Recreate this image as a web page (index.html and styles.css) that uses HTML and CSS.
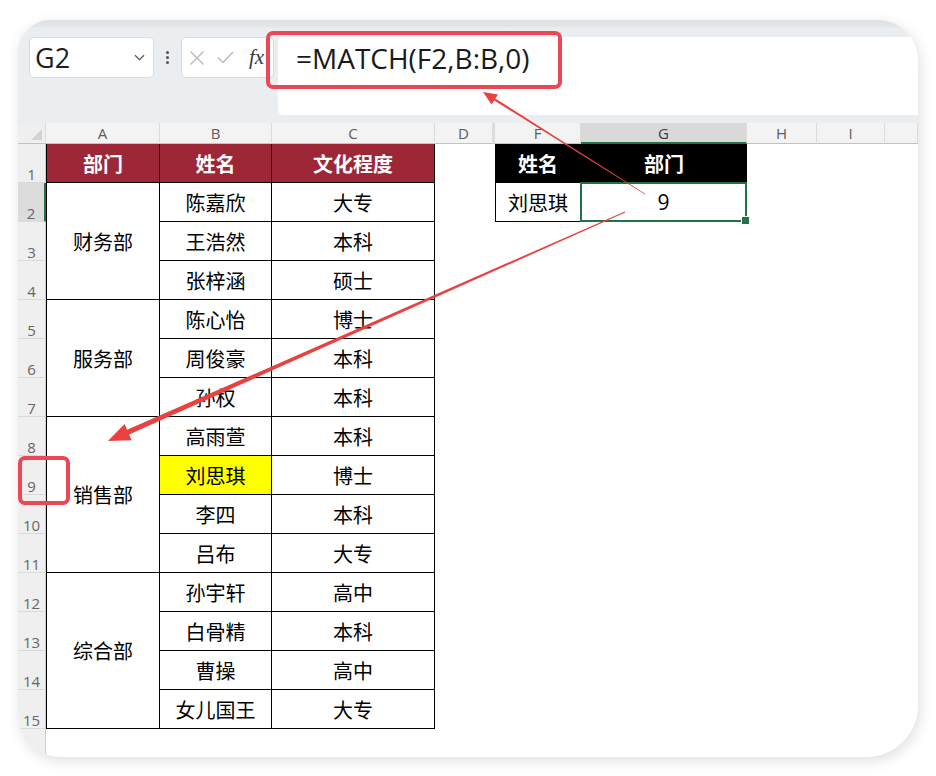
FILE: index.html
```html
<!DOCTYPE html>
<html lang="zh">
<head>
<meta charset="utf-8">
<link rel="stylesheet" href="styles.css">
</head>
<body>
<div class="card">
  <div class="fbar">
    <div class="namebox">
      <span class="ref">G2</span>
      <svg class="chev" width="11" height="7" viewBox="0 0 11 7"><path d="M1 1.2 L5.5 5.6 L10 1.2" fill="none" stroke="#555" stroke-width="1.2"/></svg>
    </div>
    <div class="dots"><i></i><i></i><i></i></div>
    <div class="funcs">
      <svg width="16" height="16" viewBox="0 0 16 16"><path d="M1.5 1.5 L14.5 14.5 M14.5 1.5 L1.5 14.5" stroke="#b9b9b9" stroke-width="1.4" fill="none"/></svg>
      <svg width="17" height="13" viewBox="0 0 17 13"><path d="M1 6.5 L6 11.5 L16 1" stroke="#b9b9b9" stroke-width="1.4" fill="none"/></svg>
      <span class="fx">fx</span>
    </div>
    <div class="input"><span class="formula">=MATCH(F2,B:B,0)</span></div>
  </div>
  <div class="sheet">
    <div class="ch corner"><svg width="11" height="11" viewBox="0 0 11 11"><path d="M11 0 L11 11 L0 11 Z" fill="#d3d3d3"/></svg></div>
    <div class="ch">A</div><div class="ch">B</div><div class="ch">C</div><div class="ch">D</div><div class="ch hid"></div><div class="ch">F</div><div class="ch sel">G</div><div class="ch">H</div><div class="ch">I</div><div class="ch"></div>

    <div class="rh">1</div><div class="t th a">部门</div><div class="t th">姓名</div><div class="t th">文化程度</div><div class="k kf">姓名</div><div class="k kg">部门</div>
    <div class="rh sel">2</div><div class="t a s3">财务部</div><div class="t">陈嘉欣</div><div class="t">大专</div><div class="v kf vl">刘思琪</div><div class="v kg act">9</div>
    <div class="rh">3</div><div class="t">王浩然</div><div class="t">本科</div>
    <div class="rh">4</div><div class="t">张梓涵</div><div class="t">硕士</div>
    <div class="rh">5</div><div class="t a s3">服务部</div><div class="t">陈心怡</div><div class="t">博士</div>
    <div class="rh">6</div><div class="t">周俊豪</div><div class="t">本科</div>
    <div class="rh">7</div><div class="t">孙权</div><div class="t">本科</div>
    <div class="rh">8</div><div class="t a s4">销售部</div><div class="t">高雨萱</div><div class="t">本科</div>
    <div class="rh">9</div><div class="t y">刘思琪</div><div class="t">博士</div>
    <div class="rh">10</div><div class="t">李四</div><div class="t">本科</div>
    <div class="rh">11</div><div class="t">吕布</div><div class="t">大专</div>
    <div class="rh">12</div><div class="t a s4">综合部</div><div class="t">孙宇轩</div><div class="t">高中</div>
    <div class="rh">13</div><div class="t">白骨精</div><div class="t">本科</div>
    <div class="rh">14</div><div class="t">曹操</div><div class="t">高中</div>
    <div class="rh">15</div><div class="t">女儿国王</div><div class="t">大专</div>
  </div>
</div>
<svg class="annot" width="936" height="776" viewBox="0 0 936 776">
  <rect x="268" y="33" width="292" height="54" rx="5" fill="none" stroke="#ec4756" stroke-width="4"/>
  <rect x="20" y="458" width="48" height="45" rx="5" fill="none" stroke="#ec4756" stroke-width="4"/>
  <polygon points="645.2,193.7 495.4,98.5 498,94.4 483,92 491.6,104.6 494.2,100.5 644.8,194.3" fill="#e8413f"/>
  <polygon points="624.8,211.5 127.1,429.8 124.5,423.9 108,441 131.7,440.3 129.1,434.4 625.2,212.5" fill="#e8413f"/>
</svg>
</body>
</html>
```

FILE: styles.css
```css
* { box-sizing: border-box; margin: 0; padding: 0; }
html, body { width: 936px; height: 776px; background: #fff; overflow: hidden; }
body { position: relative; font-family: "Open Sans", "Noto Sans CJK SC", sans-serif; padding: 20px 18px 0 18px; }

.card {
  width: 900px;
  height: 737px;
  border-radius: 32px 40px 52px 42px;
  overflow: hidden;
  background: #fff;
  box-shadow: 2px 4px 14px rgba(0, 0, 0, 0.13);
  display: flex;
  flex-direction: column;
}

.fbar {
  height: 103px;
  flex: none;
  display: flex;
  align-items: flex-start;
  padding: 17px 0 0 11px;
  background: linear-gradient(#dde1e6 0, #e3e7eb 7px, #ebeef1 8px);
}
.namebox {
  width: 125px; height: 41px;
  background: #fff;
  border: 1px solid #d9dcdf;
  border-radius: 5px;
  display: flex; align-items: center; justify-content: space-between;
  padding: 0 8px 0 5px;
}
.ref { font-size: 27px; line-height: 1; color: #1f1f1f; }
.dots { width: 27px; height: 41px; display: flex; flex-direction: column; align-items: center; justify-content: center; gap: 2px; }
.dots i { width: 3px; height: 3px; border-radius: 50%; background: #555; }
.funcs {
  width: 93px; height: 41px;
  background: #fff;
  border: 1px solid #d9dcdf;
  border-radius: 5px;
  display: flex; align-items: center;
  padding-left: 7px; gap: 12px;
}
.fx { font-family: "Liberation Serif", serif; font-style: italic; font-size: 21px; color: #3a3a3a; margin-left: 3px; }
.input {
  flex: 1; height: 78px; margin-left: 4px;
  background: #fff;
  border-radius: 5px 0 0 5px;
  padding: 4px 0 0 18px;
}
.formula { font-size: 28px; line-height: 34px; color: #1a1a1a; }

.sheet {
  flex: 1;
  display: grid;
  grid-template-columns: 28px 114px 112px 163px 58px 2px 86px 166px 70px 68px 1fr;
  grid-template-rows: 21px repeat(15, 39px) 1fr;
  background: linear-gradient(to right, #efefef 27px, #cfcfcf 27px, #cfcfcf 28px, #fff 28px);
}
.ch {
  background: #f3f3f3;
  border-bottom: 1px solid #c2c2c2;
  border-right: 1px solid #dcdcdc;
  font-size: 15px; line-height: 20px;
  color: #5c5c5c;
  display: flex; align-items: center; justify-content: center;
}
.ch.corner { align-items: flex-end; justify-content: flex-end; padding: 0 3px 3px 0; background: #efefef; }
.ch.hid { border-left: 1px solid #dcdcdc; }
.ch.sel { background: #d9d9d9; border-bottom: 2px solid #217346; color: #3a3a3a; }

.rh {
  grid-column: 1;
  font-size: 15px; line-height: 15px;
  color: #666;
  display: flex; align-items: flex-end; justify-content: center;
  padding-bottom: 0;
  border-bottom: 1px solid #dadada;
  border-right: 1px solid #cfcfcf;
}
.rh.sel { background: #dcdcdc; border-right: 2px solid #217346; }

.t, .k, .v {
  font-family: "Noto Sans CJK SC", sans-serif;
  font-size: 20px;
  color: #000;
  display: flex; align-items: center; justify-content: center;
}
.t { border-right: 1px solid #000; border-bottom: 1px solid #000; }
.t.a { border-left: 1px solid #000; }
.th { background: #9d2737; color: #fff; font-weight: 700; }
.s3 { grid-row: span 3; }
.s4 { grid-row: span 4; }
.y { background: #ffff00; }

.kf { grid-column: 7; }
.kg { grid-column: 8; }
.k { background: #000; color: #fff; font-weight: 700; }
.v { border-right: 1px solid #000; border-bottom: 1px solid #000; }
.v.vl { border-left: 1px solid #000; }
.v.act { position: relative; font-family: "Open Sans", sans-serif; font-size: 21px; }
.v.act::after {
  content: "";
  position: absolute;
  left: -1px; top: -1px; right: -1px; bottom: -1px;
  border: 2px solid #217346;
}
.v.act::before {
  content: "";
  position: absolute;
  right: -4px; bottom: -4px;
  width: 7px; height: 7px;
  background: #217346;
  border: 1px solid #fff;
  z-index: 1;
}

.annot { position: absolute; left: 0; top: 0; pointer-events: none; }
```
